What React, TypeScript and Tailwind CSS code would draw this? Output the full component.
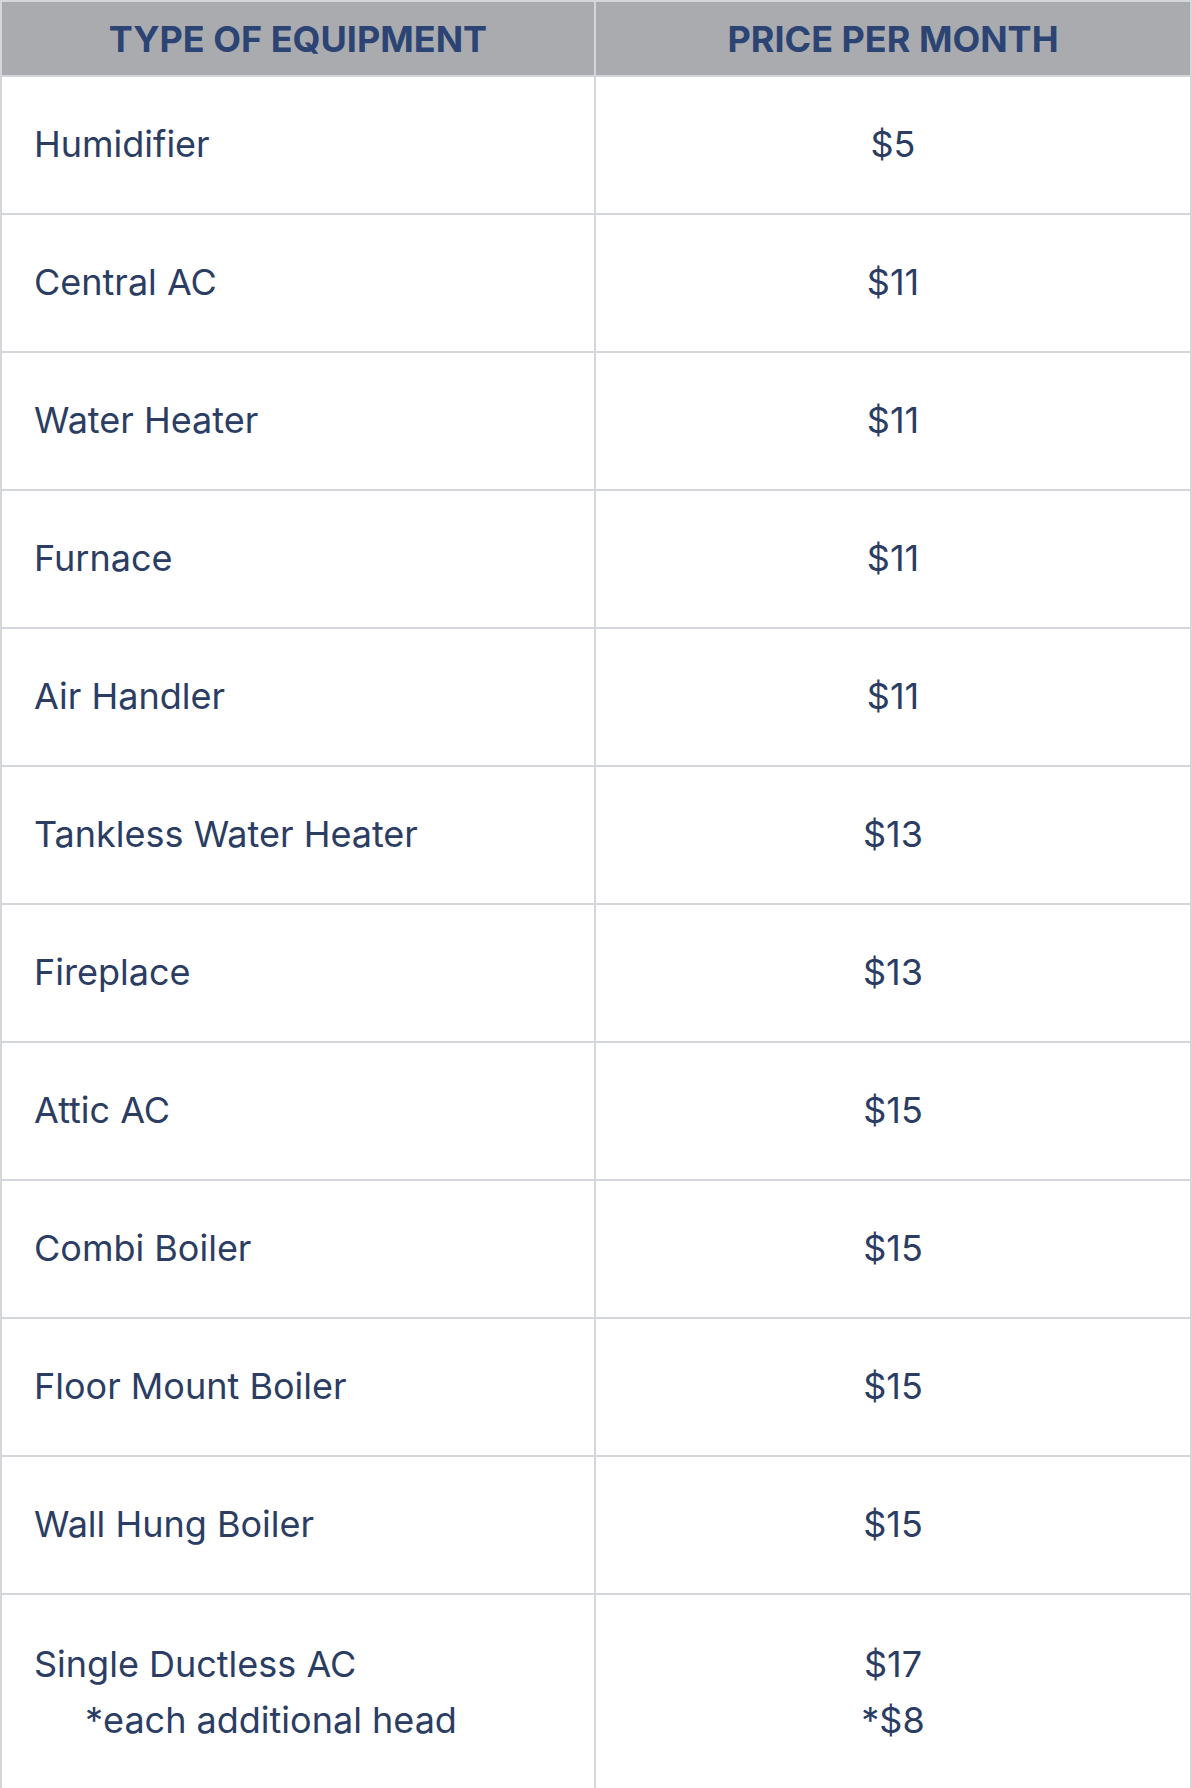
const rows: { name: string; price: string }[] = [
  { name: "Humidifier", price: "$5" },
  { name: "Central AC", price: "$11" },
  { name: "Water Heater", price: "$11" },
  { name: "Furnace", price: "$11" },
  { name: "Air Handler", price: "$11" },
  { name: "Tankless Water Heater", price: "$13" },
  { name: "Fireplace", price: "$13" },
  { name: "Attic AC", price: "$15" },
  { name: "Combi Boiler", price: "$15" },
  { name: "Floor Mount Boiler", price: "$15" },
  { name: "Wall Hung Boiler", price: "$15" },
];

export default function App() {
  return (
    <main
      className="w-[1192px] bg-white text-[#2b3d63]"
      style={{ fontFamily: "Inter, 'Noto Sans', sans-serif" }}
    >
      <table className="w-full border-collapse table-fixed">
        <thead>
          <tr className="bg-[#a9abae] h-[75px]">
            <th className="w-[594px] border-2 border-[#d3d6da] text-[36px] font-bold text-[#2c4474]">
              TYPE OF EQUIPMENT
            </th>
            <th className="border-2 border-[#d3d6da] text-[36px] font-bold text-[#2c4474]">
              PRICE PER MONTH
            </th>
          </tr>
        </thead>
        <tbody>
          {rows.map((row) => (
            <tr key={row.name} className="h-[138px]">
              <td className="border-2 border-[#d3d6da] pl-[32px] pb-[2px] text-[36px]">
                {row.name}
              </td>
              <td className="border-2 border-[#d3d6da] pb-[2px] text-center text-[36px]">
                {row.price}
              </td>
            </tr>
          ))}
          <tr className="h-[195px]">
            <td className="border-2 border-[#d3d6da] pl-[32px] text-[36px] leading-[56px]">
              <div>Single Ductless AC</div>
              <div className="pl-[51px]">*each additional head</div>
            </td>
            <td className="border-2 border-[#d3d6da] text-center text-[36px] leading-[56px]">
              <div>$17</div>
              <div>*$8</div>
            </td>
          </tr>
        </tbody>
      </table>
    </main>
  );
}
